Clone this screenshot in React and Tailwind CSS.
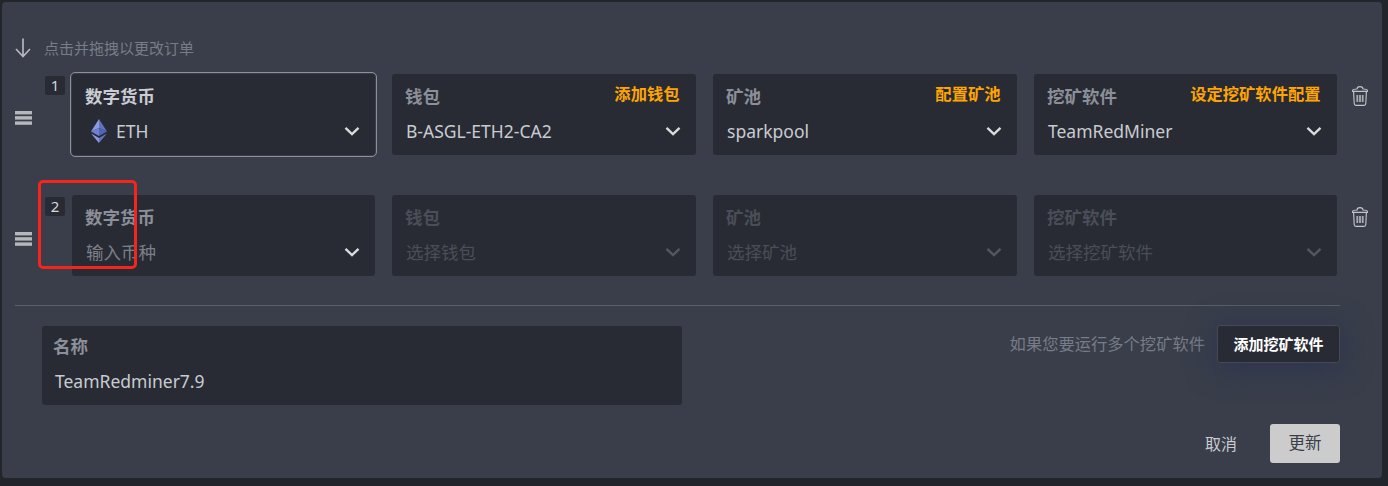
const font = { fontFamily: '"Noto Sans", "Noto Sans CJK SC", sans-serif' };

function Chevron({ faded }) {
  return (
    <svg width="16" height="10" viewBox="0 0 16 10" fill="none" className={faded ? 'opacity-25' : ''}>
      <path d="M1.5 1.8 L8 8 L14.5 1.8" stroke="#d9dadc" strokeWidth="2.4" />
    </svg>
  );
}

function DownArrow() {
  return (
    <svg width="16" height="20" viewBox="0 0 16 20" fill="none" className="shrink-0">
      <path d="M8 0.5 L8 18 M1 11 L8 18.5 L15 11" stroke="#b5b7bb" strokeWidth="1.7" />
    </svg>
  );
}

function Handle() {
  return (
    <svg width="17" height="14" viewBox="0 0 17 14" className="shrink-0">
      <rect y="0" width="17" height="3.4" fill="#b5b7bb" />
      <rect y="5.2" width="17" height="3.4" fill="#b5b7bb" />
      <rect y="10.4" width="17" height="3.4" fill="#b5b7bb" />
    </svg>
  );
}

function Trash() {
  return (
    <svg width="16" height="20" viewBox="0 0 16 20" fill="none" className="shrink-0">
      <path d="M0.6 4.4 C1 3 3 3 5 3 C5 1 6 0.6 8 0.6 C10 0.6 11 1 11 3 C13 3 15 3 15.4 4.4 L15.4 5.4 L0.6 5.4 Z" stroke="#c4c6ca" strokeWidth="1.1" />
      <path d="M1.6 5.4 L2.2 17.5 C2.3 18.8 3 19.4 4 19.4 L12 19.4 C13 19.4 13.7 18.8 13.8 17.5 L14.4 5.4" stroke="#c4c6ca" strokeWidth="1.1" />
      <rect x="4.4" y="9" width="1.8" height="7" fill="#a9abb0" />
      <rect x="7.1" y="9" width="1.8" height="7" fill="#a9abb0" />
      <rect x="9.8" y="9" width="1.8" height="7" fill="#a9abb0" />
    </svg>
  );
}

function EthIcon() {
  return (
    <svg width="16" height="24" viewBox="0 0 16 24" className="ml-[5px] shrink-0">
      <polygon points="8,0 0,12.5 8,9" fill="#8c9be0" />
      <polygon points="8,0 16,12.5 8,9" fill="#6273c4" />
      <polygon points="0,12.5 8,17 8,9" fill="#6f80d0" />
      <polygon points="16,12.5 8,17 8,9" fill="#5264b6" />
      <polygon points="0,14.5 8,24 8,19" fill="#8c9be0" />
      <polygon points="16,14.5 8,24 8,19" fill="#6273c4" />
    </svg>
  );
}

function Field({ label, action, value, icon, selected, disabled }) {
  return (
    <div className={`h-[80.5px] rounded-[3px] bg-[#282b33] pl-[13px] pr-[15.5px] pt-[9px] ${selected ? 'outline outline-1 outline-offset-1 outline-[#8d9099]' : ''}`}>
      <div className="flex h-[26px] items-center justify-between">
        <span className={`text-[17.5px] font-bold leading-[26px] ${disabled ? 'text-[#4a4e58]' : selected ? 'text-[#c9ccd2]' : 'text-[#8b8f99]'}`}>{label}</span>
        {action && <span className="-mt-[5px] mr-[1px] text-[16.3px] font-bold leading-[24px] text-[#ffa500]">{action}</span>}
      </div>
      <div className="mt-[9px] flex h-[26px] items-center justify-between">
        <div className={`ml-[1px] flex items-center gap-[9px] text-[17.5px] ${disabled ? 'text-[#4a4e58]' : ''}`}>
          {icon}
          <span className={value.muted ? 'text-[#7b7f89]' : disabled ? '' : 'text-[#c8cbd1]'}>{value.text}</span>
        </div>
        <Chevron faded={disabled} />
      </div>
    </div>
  );
}

function Row({ index, children, className }) {
  return (
    <div className={`relative flex items-center ${className}`}>
      <div className="absolute left-[30px] top-[1.5px] flex h-[19px] w-[20px] items-center justify-center rounded-[2px] bg-[#282b33] text-[15px] text-[#d5d7db]">{index}</div>
      <div className="mt-[7px] w-[57px]"><Handle /></div>
      <div className="grid w-[1265px] grid-cols-[303px_304px_304px_303px] gap-x-[17px]">{children}</div>
      <div className="ml-[15px] -mt-[37px]"><Trash /></div>
    </div>
  );
}

export default function App() {
  return (
    <div className="h-[486px] w-[1388px] overflow-hidden bg-[#22252b] pl-[2px] pt-[2px]" style={font}>
      <div className="relative h-[476px] w-[1380px] rounded-[4px] bg-[#393e4a] pl-[13px]">
        <div className="flex items-center pt-[36px] text-[15px] text-[#787c87]">
          <DownArrow />
          <span className="-mt-[1px] ml-[13px] leading-[18px]">点击并拖拽以更改订单</span>
        </div>

        <Row index="1" className="mt-[16px]">
          <Field label="数字货币" selected icon={<EthIcon />} value={{ text: 'ETH' }} />
          <Field label="钱包" action="添加钱包" value={{ text: 'B-ASGL-ETH2-CA2' }} />
          <Field label="矿池" action="配置矿池" value={{ text: 'sparkpool' }} />
          <Field label="挖矿软件" action="设定挖矿软件配置" value={{ text: 'TeamRedMiner' }} />
        </Row>

        <Row index="2" className="mt-[40.5px]">
          <Field label="数字货币" value={{ text: '输入币种', muted: true }} />
          <Field label="钱包" disabled value={{ text: '选择钱包' }} />
          <Field label="矿池" disabled value={{ text: '选择矿池' }} />
          <Field label="挖矿软件" disabled value={{ text: '选择挖矿软件' }} />
        </Row>

        <div className="mt-[29.5px] h-px w-[1325px] bg-[#5b5f6a]" />

        <div className="mt-[19px] flex w-[1325px] items-start justify-between pl-[27px]">
          <div className="mt-[1px] h-[79px] w-[640px] rounded-[3px] bg-[#282b33] pl-[11px] pt-[7px]">
            <div className="text-[17.5px] font-bold leading-[26px] text-[#8b8f99]">名称</div>
            <div className="ml-[2px] mt-[9px] text-[17.5px] leading-[26px] text-[#c8cbd1]">TeamRedminer7.9</div>
          </div>
          <div className="flex items-center">
            <span className="text-[16.3px] text-[#787c87]">如果您要运行多个挖矿软件</span>
            <button type="button" className="ml-[12px] h-[38px] w-[123px] rounded-[3px] border border-[#454954] bg-[#282b33] text-[15px] font-bold text-white shadow-[0_4px_30px_rgba(40,45,85,0.7)]">添加挖矿软件</button>
          </div>
        </div>

        <div className="mt-[19px] flex w-[1325px] items-center justify-end">
          <span className="text-[16px] text-[#c8cbd1]">取消</span>
          <button type="button" className="ml-[33px] h-[39px] w-[70px] rounded-[3px] bg-[#cccccc] text-[16.5px] text-[#393e4a]">更新</button>
        </div>

        <div className="pointer-events-none absolute left-[36px] top-[178px] h-[89px] w-[99px] rounded-[5px] border-[3px] border-[#f5241c]" />
      </div>
    </div>
  );
}
